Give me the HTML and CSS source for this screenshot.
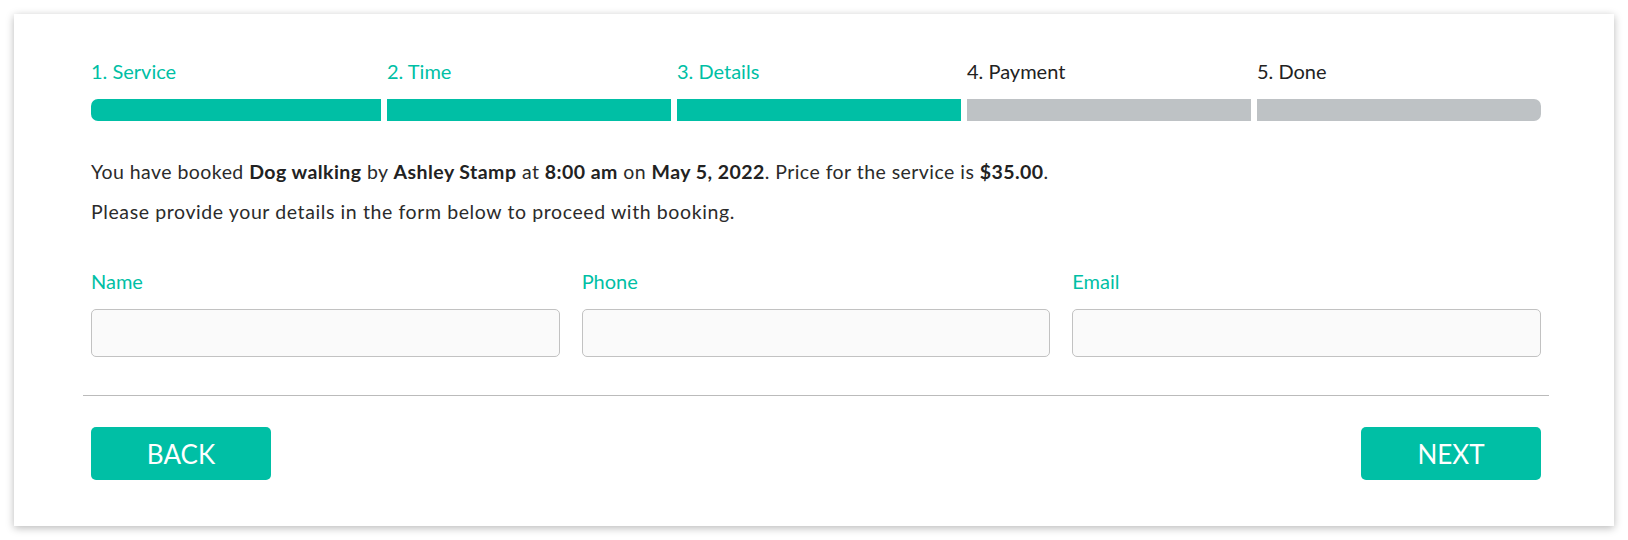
FILE: index.html
```html
<!DOCTYPE html>
<html lang="en">
<head>
<meta charset="utf-8">
<title>Booking - Details</title>
<link rel="stylesheet" href="styles.css">
</head>
<body>
<div class="card">
  <div class="steps">
    <div class="step done"><div class="step-label">1. Service</div><div class="step-bar"></div></div>
    <div class="step done"><div class="step-label">2. Time</div><div class="step-bar"></div></div>
    <div class="step done"><div class="step-label">3. Details</div><div class="step-bar"></div></div>
    <div class="step"><div class="step-label">4. Payment</div><div class="step-bar"></div></div>
    <div class="step"><div class="step-label">5. Done</div><div class="step-bar"></div></div>
  </div>
  <div class="info">
    <p>You have booked <b>Dog walking</b> by <b>Ashley Stamp</b> at <b>8:00 am</b> on <b>May 5, 2022</b>. Price for the service is <b>$35.00</b>.</p>
    <p class="note">Please provide your details in the form below to proceed with booking.</p>
  </div>
  <div class="fields">
    <div class="field"><label class="field-label">Name</label><input class="field-input" type="text"></div>
    <div class="field"><label class="field-label">Phone</label><input class="field-input" type="text"></div>
    <div class="field"><label class="field-label">Email</label><input class="field-input" type="text"></div>
  </div>
  <hr class="divider">
  <div class="actions">
    <button class="btn">BACK</button>
    <button class="btn">NEXT</button>
  </div>
</div>
</body>
</html>
```

FILE: styles.css
```css
* { box-sizing: border-box; }
html, body { margin: 0; padding: 0; background: #ffffff; }
body { font-family: Lato, "Open Sans", sans-serif; color: #2b2b2b; }

.card {
  margin: 14px;
  width: 1600px;
  height: 512px;
  background: #ffffff;
  box-shadow: 0 2px 8px rgba(0, 0, 0, 0.28);
  padding: 45px 73px 0 77px;
}

.steps {
  display: grid;
  grid-template-columns: repeat(5, 1fr);
}
.step + .step { padding-left: 6px; }
.step-label {
  font-size: 20px;
  line-height: 24px;
  color: #222222;
  margin-bottom: 16px;
}
.step.done .step-label { color: #00bfa5; }
.step-bar {
  height: 22px;
  background: #bec2c5;
}
.step.done .step-bar { background: #00bfa5; }
.step:first-child .step-bar { border-radius: 7px 0 0 7px; }
.step:last-child .step-bar { border-radius: 0 7px 7px 0; }

.info { margin-top: 33px; }
.info p {
  margin: 0;
  font-size: 19.5px;
  letter-spacing: 0.45px;
  line-height: 35px;
  color: #2b2b2b;
}
.info p + p { margin-top: 5px; }
.info .note { letter-spacing: 0.6px; }
.info b { font-weight: 700; color: #222222; }

.fields {
  margin-top: 40px;
  display: grid;
  grid-template-columns: repeat(3, 1fr);
  column-gap: 22px;
}
.field { display: flex; flex-direction: column; }
.field-label {
  font-size: 20px;
  line-height: 24px;
  color: #00bfa5;
  margin-bottom: 16px;
}
.field-input {
  height: 48px;
  border: 1.5px solid #c2c2c2;
  border-radius: 5px;
  background: #fafafa;
  font: inherit;
  padding: 0 12px;
}

.divider {
  margin: 38px -8px 0;
  border: 0;
  border-top: 1px solid #bbbbbb;
  height: 0;
}

.actions {
  margin-top: 31px;
  display: flex;
  justify-content: space-between;
}
.btn {
  width: 180px;
  height: 53px;
  border: 0;
  border-radius: 5px;
  background: #00bfa5;
  color: #ffffff;
  font-family: Lato, "Open Sans", sans-serif;
  font-size: 26px;
  padding: 0;
  cursor: pointer;
}
```
